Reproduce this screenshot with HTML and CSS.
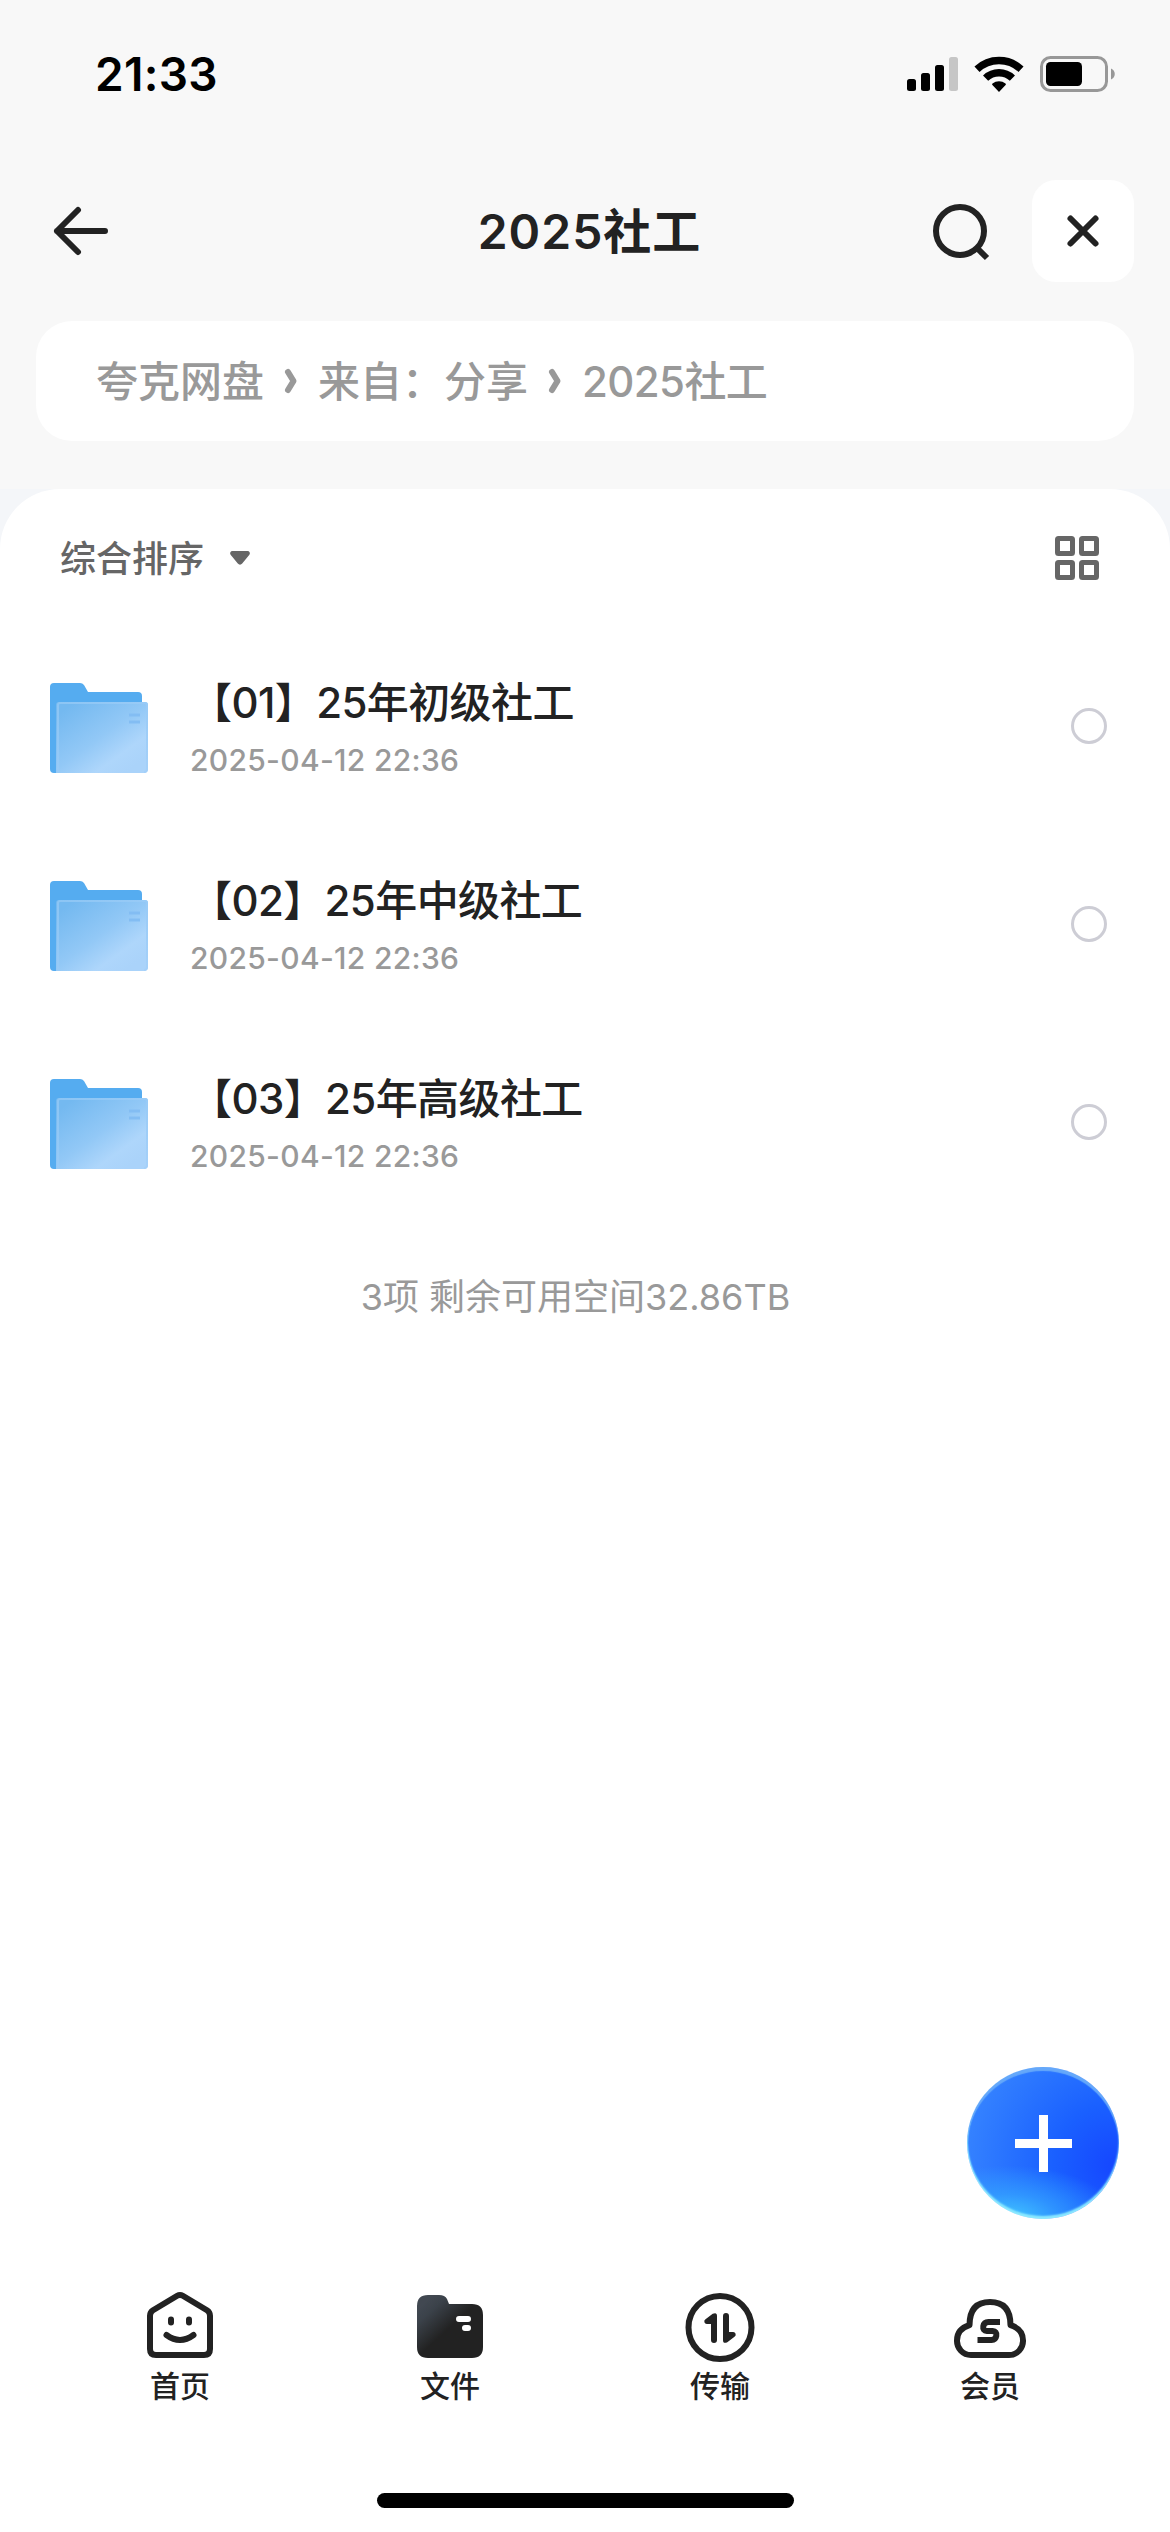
FILE: index.html
```
<!DOCTYPE html>
<html lang="zh-CN">
<head>
	<meta charset="utf-8">
	<meta name="viewport" content="width=device-width, initial-scale=1">
	<title>2025社工</title>
	<link rel="stylesheet" href="styles.css">
</head>
<body>
	<div class="status">
		<span class="time">21:33</span>
		<svg class="signal" width="51" height="36" viewBox="0 0 51 36">
			<rect x="0" y="23" width="9" height="12" rx="2.5"/>
			<rect x="14" y="17" width="9" height="18" rx="2.5"/>
			<rect x="28" y="9" width="9" height="26" rx="2.5"/>
			<rect x="42" y="1" width="9" height="34" rx="2.5" fill="#c6c6c6"/>
		</svg>
		<svg class="wifi" width="50" height="36" viewBox="0 0 50 36">
			<g fill="none" stroke="#000" stroke-width="7.4">
				<path d="M3 13.2a32 32 0 0 1 44 0"/>
				<path d="M11.6 22.2a19.2 19.2 0 0 1 26.8 0"/>
			</g>
			<path d="M25 36l-6.6-6.9a1 1 0 0 1 .1-1.5 10.2 10.2 0 0 1 13 0 1 1 0 0 1 .1 1.5z"/>
		</svg>
		<svg class="battery" width="76" height="36" viewBox="0 0 76 36">
			<rect x="1.5" y="1.5" width="65" height="33" rx="9" fill="none" stroke="#989898" stroke-width="3"/>
			<rect x="6" y="6" width="36" height="24" rx="4.5"/>
			<path d="M71 12.5c5 2 5 9 0 11z" fill="#989898"/>
		</svg>
	</div>

	<div class="header">
		<svg class="back" width="60" height="60" viewBox="0 0 60 60">
			<path d="M27 9L6 30l21 21M6 30h48" />
		</svg>
		<h1>2025社工</h1>
		<svg class="search" width="60" height="60" viewBox="0 0 60 60">
			<ellipse cx="30" cy="30" rx="24" ry="24"/>
			<path d="M46 46l11 11"/>
		</svg>
		<div class="close">
			<svg width="36" height="36" viewBox="0 0 36 36"><path d="M5.500 5.500l25 25M30.500 5.500l-25 25"/></svg>
		</div>
	</div>

	<div class="crumbs">
		<span>夸克网盘</span>
		<svg width="14" height="26" viewBox="0 0 14 26"><path d="M4 4l5.500 9L4 22"/></svg>
		<span>来自：分享</span>
		<svg width="14" height="26" viewBox="0 0 14 26"><path d="M4 4l5.500 9L4 22"/></svg>
		<span class="current">2025社工</span>
	</div>

	<div class="panel-wrap">
	<div class="panel">
		<div class="sort">
			<span>综合排序</span>
			<svg class="caret" width="22" height="16" viewBox="0 0 22 16"><path d="M3.500 1h15a2.300 2.300 0 0 1 1.900 3.700L13.200 13.600a2.800 2.800 0 0 1-4.400 0L1.600 4.700A2.300 2.300 0 0 1 3.500 1z"/></svg>
			<svg class="grid" width="44" height="44" viewBox="0 0 44 44">
				<rect x="2.500" y="2.500" width="15" height="15" rx="1"/>
				<rect x="26.500" y="2.500" width="15" height="15" rx="1"/>
				<rect x="2.500" y="26.500" width="15" height="15" rx="1"/>
				<rect x="26.500" y="26.500" width="15" height="15" rx="1"/>
			</svg>
		</div>

		<div class="files">
			<div class="file">
				<svg class="folder" width="98" height="90" viewBox="0 0 98 90">
					<defs>
						<linearGradient id="front" x1="0.1" y1="0.1" x2="0.85" y2="0.9">
							<stop offset="0" stop-color="#74b9f0"/>
							<stop offset=".5" stop-color="#92c8f6"/>
							<stop offset=".8" stop-color="#aed6fb"/>
							<stop offset="1" stop-color="#aad3fa"/>
						</linearGradient>
						<linearGradient id="rim" x1="0" y1="0" x2="1" y2="1">
							<stop offset="0" stop-color="#8cc5f4"/>
							<stop offset="1" stop-color="#a4d0f9"/>
						</linearGradient>
					</defs>
					<path d="M0 4a4 4 0 0 1 4-4h26a5 5 0 0 1 4 2l4 7h50a4 4 0 0 1 4 4v77H4a4 4 0 0 1-4-4z" fill="#55acf0"/>
					<path d="M6 22a3 3 0 0 1 3-3h86a3 3 0 0 1 3 3v64a4 4 0 0 1-4 4H6z" fill="url(#front)"/>
					<path d="M8 90V22a2 2 0 0 1 2-2h85a2 2 0 0 1 2 2v64a3 3 0 0 1-3 3" fill="none" stroke="url(#rim)" stroke-width="2"/>
					<path d="M79 32h11M79 39h11" stroke="#83bdf3" stroke-width="3"/>
				</svg>
				<div class="info">
					<p class="name">【01】25年初级社工</p>
					<p class="date">2025-04-12 22:36</p>
				</div>
				<i class="check"></i>
			</div>
			<div class="file">
				<svg class="folder" width="98" height="90" viewBox="0 0 98 90">
					<path d="M0 4a4 4 0 0 1 4-4h26a5 5 0 0 1 4 2l4 7h50a4 4 0 0 1 4 4v77H4a4 4 0 0 1-4-4z" fill="#55acf0"/>
					<path d="M6 22a3 3 0 0 1 3-3h86a3 3 0 0 1 3 3v64a4 4 0 0 1-4 4H6z" fill="url(#front)"/>
					<path d="M8 90V22a2 2 0 0 1 2-2h85a2 2 0 0 1 2 2v64a3 3 0 0 1-3 3" fill="none" stroke="url(#rim)" stroke-width="2"/>
					<path d="M79 32h11M79 39h11" stroke="#83bdf3" stroke-width="3"/>
				</svg>
				<div class="info">
					<p class="name">【02】25年中级社工</p>
					<p class="date">2025-04-12 22:36</p>
				</div>
				<i class="check"></i>
			</div>
			<div class="file">
				<svg class="folder" width="98" height="90" viewBox="0 0 98 90">
					<path d="M0 4a4 4 0 0 1 4-4h26a5 5 0 0 1 4 2l4 7h50a4 4 0 0 1 4 4v77H4a4 4 0 0 1-4-4z" fill="#55acf0"/>
					<path d="M6 22a3 3 0 0 1 3-3h86a3 3 0 0 1 3 3v64a4 4 0 0 1-4 4H6z" fill="url(#front)"/>
					<path d="M8 90V22a2 2 0 0 1 2-2h85a2 2 0 0 1 2 2v64a3 3 0 0 1-3 3" fill="none" stroke="url(#rim)" stroke-width="2"/>
					<path d="M79 32h11M79 39h11" stroke="#83bdf3" stroke-width="3"/>
				</svg>
				<div class="info">
					<p class="name">【03】25年高级社工</p>
					<p class="date">2025-04-12 22:36</p>
				</div>
				<i class="check"></i>
			</div>
		</div>
		<p class="summary">3项 剩余可用空间32.86TB</p>
	</div>
	</div>

	<div class="tabs">
		<div class="tab">
			<svg width="72" height="72" viewBox="0 0 72 72">
				<g fill="none" stroke="#222" stroke-width="6" stroke-linecap="round" stroke-linejoin="round">
					<path d="M33.200 6.800L9 21.300Q6 23.200 6 26.800V60q0 6 6 6h48q6 0 6-6V26.800q0-3.600-3-5.500L38.800 6.800q-2.800-1.700-5.600 0z"/>
					<path d="M27 30.500v3M45 30.500v3"/>
					<path d="M22.500 46q13.500 10 27 0"/>
				</g>
			</svg>
			<span>首页</span>
		</div>
		<div class="tab">
			<svg width="72" height="72" viewBox="0 0 72 72">
				<defs>
					<linearGradient id="dark" gradientUnits="userSpaceOnUse" x1="10" y1="14" x2="34" y2="40">
						<stop offset="0" stop-color="#414851"/>
						<stop offset=".3" stop-color="#3b424a"/>
						<stop offset="1" stop-color="#222"/>
					</linearGradient>
				</defs>
				<path d="M3 17Q3 6 14 6h11q6 0 8 4l2 5h23q11 0 11 11v32q0 11-11 11H14Q3 69 3 58z" fill="url(#dark)"/>
				<path d="M45 30h9M51 39h3" stroke="#fff" stroke-width="6" stroke-linecap="round"/>
			</svg>
			<span>文件</span>
		</div>
		<div class="tab">
			<svg width="72" height="72" viewBox="0 0 72 72">
				<circle cx="36" cy="38.500" r="31.500" fill="none" stroke="#222" stroke-width="6"/>
				<path d="M33 27v24a3 3 0 0 1-6 0V35h-4a2.600 2.600 0 0 1-1.500-4.800l7.200-5.400Q33 22.800 33 27z" fill="#222"/>
				<path d="M39 51V27a3 3 0 0 1 6 0v16h4a2.600 2.600 0 0 1 1.500 4.800l-7.200 5.400Q39 55.200 39 51z" fill="#222"/>
			</svg>
			<span>传输</span>
		</div>
		<div class="tab">
			<svg width="72" height="72" viewBox="0 0 72 72">
				<path d="M17 66A14 14 0 0 1 3 51.500Q3 40 15.500 36.200q0-23.200 20.500-23.200t20.500 23.200Q69 40 69 51.500A14 14 0 0 1 55 66z" fill="none" stroke="#222" stroke-width="6" stroke-linejoin="round"/>
				<path d="M46 33H34.500q-4.500 0-5.200 4.300t3.700 4.700h5.500q4.500.5 3.800 4.700T37.500 51H23.500" fill="none" stroke="#222" stroke-width="6"/>
			</svg>
			<span>会员</span>
		</div>
	</div>
	<div class="home">
		<div class="home-bar"></div>
	</div>

	<div class="fab">
		<svg width="57" height="57" viewBox="0 0 57 57"><path d="M28.500 0v57M0 28.500h57"/></svg>
	</div>
</body>
</html>
```
FILE: styles.css
```
* {
	box-sizing: border-box;
	margin: 0;
	padding: 0;
}
body {
	width: 1170px;
	height: 2532px;
	display: flex;
	flex-direction: column;
	background: #f8f8f8;
	color: #222;
	font-family: Inter, "Noto Sans CJK SC", sans-serif;
	position: relative;
	overflow: hidden;
}
svg {
	display: block;
	flex-shrink: 0;
	overflow: visible;
}
.status {
	height: 148px;
	padding-left: 95px;
	padding-right: 54px;
	display: flex;
	align-items: center;
}
.time {
	margin-right: auto;
	color: #000;
	font-size: 46px;
	font-weight: 600;
	letter-spacing: .3px;
}
.wifi {
	margin: 0 16px;
}

.header {
	height: 173px;
	padding: 32px 36px 0 51px;
	display: flex;
	align-items: flex-start;
}
.header svg {
	fill: none;
	stroke: #222;
	stroke-width: 6;
}
.back {
	margin-top: 21px;
	stroke-linecap: round;
	stroke-linejoin: round;
}
.header h1 {
	flex: 1;
	padding-top: 1px;
	padding-left: 138px;
	text-align: center;
	font-size: 48px;
	line-height: 102px;
	font-weight: 600;
	letter-spacing: 1px;
}
.search {
	margin: 21px 42px 0 0;
}
.close {
	width: 102px;
	height: 102px;
	border-radius: 24px;
	background: #fff;
	display: flex;
	align-items: center;
	justify-content: center;
}
.close svg {
	stroke-linecap: round;
}

.crumbs {
	height: 120px;
	margin: 0 36px;
	padding-left: 60px;
	border-radius: 36px;
	background: #fff;
	display: flex;
	align-items: center;
	color: #999;
	font-size: 42px;
	font-weight: 500;
}
.crumbs span {
	padding-bottom: 5px;
}
.crumbs .current {
	letter-spacing: -.6px;
}
.crumbs svg {
	margin: 0 20px;
	fill: none;
	stroke: #999;
	stroke-width: 6;
	stroke-linecap: round;
	stroke-linejoin: round;
}

.panel-wrap {
	flex: 1;
	margin-top: 48px;
	background: #f4f6f9;
}
.panel {
	height: 100%;
	border-radius: 60px 60px 0 0;
	background: #fff;
}
.sort {
	height: 138px;
	padding: 0 71px 0 60px;
	display: flex;
	align-items: center;
	color: #666;
	font-size: 36px;
	font-weight: 500;
}
.sort span {
	padding-bottom: 4px;
}
.caret {
	margin-left: 25px;
	fill: #666;
}
.grid {
	margin-left: auto;
	fill: none;
	stroke: #666;
	stroke-width: 5;
}
.file {
	height: 198px;
	padding: 0 63px 0 50px;
	display: flex;
	align-items: center;
}
.folder {
	margin-top: 3px;
}
.info {
	margin-left: 42px;
	padding-top: 5px;
	flex: 1;
}
.name {
	font-size: 42px;
	line-height: 62px;
	font-weight: 500;
	letter-spacing: -.6px;
}
.date {
	color: #999;
	font-size: 30px;
	line-height: 52px;
	font-weight: 500;
	letter-spacing: .3px;
}
.check {
	width: 36px;
	height: 36px;
	border: 3.5px solid #cdcdd5;
	border-radius: 50%;
}
.summary {
	margin-top: 50px;
	padding-right: 19px;
	text-align: center;
	color: #999;
	font-size: 36px;
	line-height: 52px;
}

.tabs {
	height: 204px;
	padding: 0 45px;
	background: #fff;
	display: flex;
}
.tab {
	flex: 1;
	display: flex;
	flex-direction: column;
	align-items: center;
	font-size: 30px;
	line-height: 40px;
	font-weight: 500;
}
.tab span {
	margin-top: 5px;
}
.home {
	height: 39px;
	background: #fff;
}
.home-bar {
	width: 417px;
	height: 15px;
	margin: 0 auto;
	border-radius: 8px;
	background: #000;
}

.fab {
	position: absolute;
	left: 967px;
	top: 2067px;
	width: 152px;
	height: 152px;
	border-radius: 50%;
	background: radial-gradient(ellipse 110px 52px at 27% 99%, #40c4ff 0, rgba(52, 165, 255, .7) 45%, rgba(40, 130, 255, 0) 100%), radial-gradient(circle at 98% 65%, #1546ff 0, #1a60ff 35%, #2a75ff 65%, #3d8cff 100%);
	box-shadow: inset 0 4px 1px #65a8fa, inset 0 -3px 2px #8ceaff, inset 1px 0 1px #7fd8ff;
	display: flex;
	align-items: center;
	justify-content: center;
}
.fab svg {
	stroke: #fff;
	stroke-width: 9;
}
```
